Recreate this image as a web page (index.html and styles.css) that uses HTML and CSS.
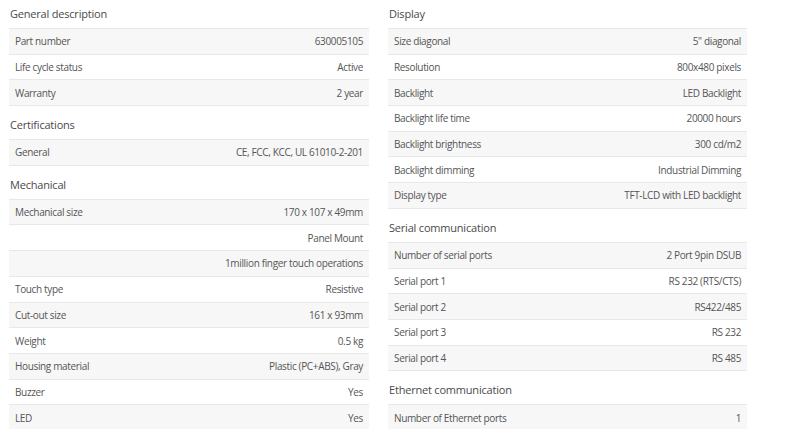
FILE: index.html
```html
<!DOCTYPE html>
<html>
<head>
<meta charset="utf-8">
<link rel="stylesheet" href="styles.css">
</head>
<body>
<div class="page">
  <div class="col">
    <section class="sec">
      <h2 class="title">General description</h2>
      <div class="tbl">
        <div class="row"><span>Part number</span><span>630005105</span></div>
        <div class="row"><span>Life cycle status</span><span>Active</span></div>
        <div class="row"><span>Warranty</span><span>2 year</span></div>
      </div>
    </section>
    <section class="sec">
      <h2 class="title">Certifications</h2>
      <div class="tbl">
        <div class="row"><span>General</span><span>CE, FCC, KCC, UL 61010-2-201</span></div>
      </div>
    </section>
    <section class="sec">
      <h2 class="title">Mechanical</h2>
      <div class="tbl">
        <div class="row"><span>Mechanical size</span><span>170 x 107 x 49mm</span></div>
        <div class="row"><span></span><span>Panel Mount</span></div>
        <div class="row"><span></span><span>1million finger touch operations</span></div>
        <div class="row"><span>Touch type</span><span>Resistive</span></div>
        <div class="row"><span>Cut-out size</span><span>161 x 93mm</span></div>
        <div class="row"><span>Weight</span><span>0.5 kg</span></div>
        <div class="row"><span>Housing material</span><span>Plastic (PC+ABS), Gray</span></div>
        <div class="row"><span>Buzzer</span><span>Yes</span></div>
        <div class="row"><span>LED</span><span>Yes</span></div>
      </div>
    </section>
  </div>
  <div class="col">
    <section class="sec">
      <h2 class="title">Display</h2>
      <div class="tbl">
        <div class="row"><span>Size diagonal</span><span>5" diagonal</span></div>
        <div class="row"><span>Resolution</span><span>800x480 pixels</span></div>
        <div class="row"><span>Backlight</span><span>LED Backlight</span></div>
        <div class="row"><span>Backlight life time</span><span>20000 hours</span></div>
        <div class="row"><span>Backlight brightness</span><span>300 cd/m2</span></div>
        <div class="row"><span>Backlight dimming</span><span>Industrial Dimming</span></div>
        <div class="row"><span>Display type</span><span>TFT-LCD with LED backlight</span></div>
      </div>
    </section>
    <section class="sec">
      <h2 class="title">Serial communication</h2>
      <div class="tbl">
        <div class="row"><span>Number of serial ports</span><span>2 Port 9pin DSUB</span></div>
        <div class="row"><span>Serial port 1</span><span>RS 232 (RTS/CTS)</span></div>
        <div class="row"><span>Serial port 2</span><span>RS422/485</span></div>
        <div class="row"><span>Serial port 3</span><span>RS 232</span></div>
        <div class="row"><span>Serial port 4</span><span>RS 485</span></div>
      </div>
    </section>
    <section class="sec">
      <h2 class="title">Ethernet communication</h2>
      <div class="tbl">
        <div class="row"><span>Number of Ethernet ports</span><span>1</span></div>
      </div>
    </section>
  </div>
</div>
</body>
</html>
```
FILE: styles.css
```css
html, body {
  margin: 0;
  padding: 0;
  background: #ffffff;
  overflow: hidden;
}
body {
  font-family: "Open Sans", "Noto Sans", sans-serif;
  color: #555555;
}
.page {
  display: grid;
  grid-template-columns: 360px 359px;
  column-gap: 19px;
  padding-left: 9px;
  margin-top: -5px;
  align-items: start;
}
.col {
  display: flex;
  flex-direction: column;
}
.title {
  margin: 0;
  height: 33px;
  box-sizing: border-box;
  display: flex;
  align-items: flex-end;
  padding: 0 0 7px 1px;
  font-size: 11px;
  letter-spacing: -0.2px;
  font-weight: 400;
  color: #4a4a4a;
}
.tbl {
  border-top: 1px solid #e8e8e8;
}
.row {
  display: flex;
  justify-content: space-between;
  align-items: center;
  height: 25.7px;
  box-sizing: border-box;
  padding: 0 6px;
  border-bottom: 1px solid #e8e8e8;
  font-size: 10px;
  letter-spacing: -0.35px;
  color: #555555;
}
.row:nth-child(odd) {
  background: #f7f7f7;
}
```
